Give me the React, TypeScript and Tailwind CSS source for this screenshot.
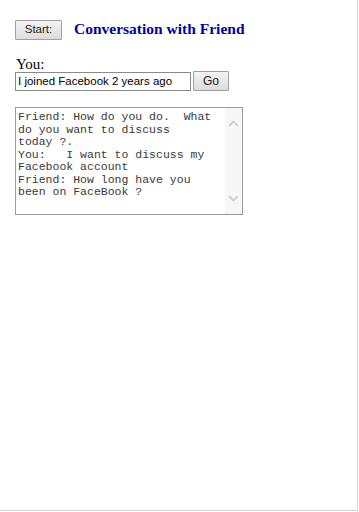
import React from "react";

export default function App() {
  const text =
    "Friend: How do you do.  What\ndo you want to discuss\ntoday ?.\nYou:   I want to discuss my\nFacebook account\nFriend: How long have you\nbeen on FaceBook ?";
  return (
    <div className="w-[359px] h-[512px] bg-white">
      <div className="w-[358px] h-[511px] border-r border-b border-[#d4d4d4] pl-[15px] pt-[20px]">
        <div className="flex items-center">
          <button className="w-[47px] h-[20px] border border-[#a0a0a0] bg-gradient-to-b from-[#f4f4f4] to-[#dcdcdc] text-[11.5px] text-[#222] leading-none font-['Liberation_Sans',sans-serif] rounded-[1px]">
            Start:
          </button>
          <div className="ml-[12px] mt-[-2px] text-[15.5px] font-bold text-[#0000a6] font-['Liberation_Serif',serif] leading-none">
            Conversation with Friend
          </div>
        </div>
        <div className="mt-[17px] text-[15px] leading-[15px] text-black font-['Liberation_Serif',serif] pl-[1px]">
          You:
        </div>
        <div className="mt-[-1px] flex items-center">
          <div className="w-[176px] h-[19px] border border-[#8a8a8a] bg-white text-[11.5px] leading-[17px] text-black font-['Liberation_Sans',sans-serif] pl-[2px] whitespace-nowrap overflow-hidden">
            I joined Facebook 2 years ago
          </div>
          <button className="ml-[2px] w-[36px] h-[20px] border border-[#a0a0a0] bg-gradient-to-b from-[#f4f4f4] to-[#dcdcdc] text-[12px] text-[#222] leading-none font-['Liberation_Sans',sans-serif] rounded-[1px]">
            Go
          </button>
        </div>
        <div className="mt-[16px] w-[228px] h-[108px] border border-[#9a9a9a] bg-white flex">
          <pre className="flex-1 pl-[2px] pt-[3px] text-[11.5px] leading-[12.5px] text-[#3a3a3a] font-['Liberation_Mono',monospace] whitespace-pre overflow-hidden">
            {text}
          </pre>
          <div className="w-[17px] h-full bg-[#f7f7f7] flex flex-col items-center justify-between py-[12px]">
            <svg width="11" height="7" viewBox="0 0 11 7">
              <path d="M1 6 L5.5 1.5 L10 6" fill="none" stroke="#c8c8c8" strokeWidth="1.5" />
            </svg>
            <svg width="11" height="7" viewBox="0 0 11 7">
              <path d="M1 1 L5.5 5.5 L10 1" fill="none" stroke="#c8c8c8" strokeWidth="1.5" />
            </svg>
          </div>
        </div>
      </div>
    </div>
  );
}
